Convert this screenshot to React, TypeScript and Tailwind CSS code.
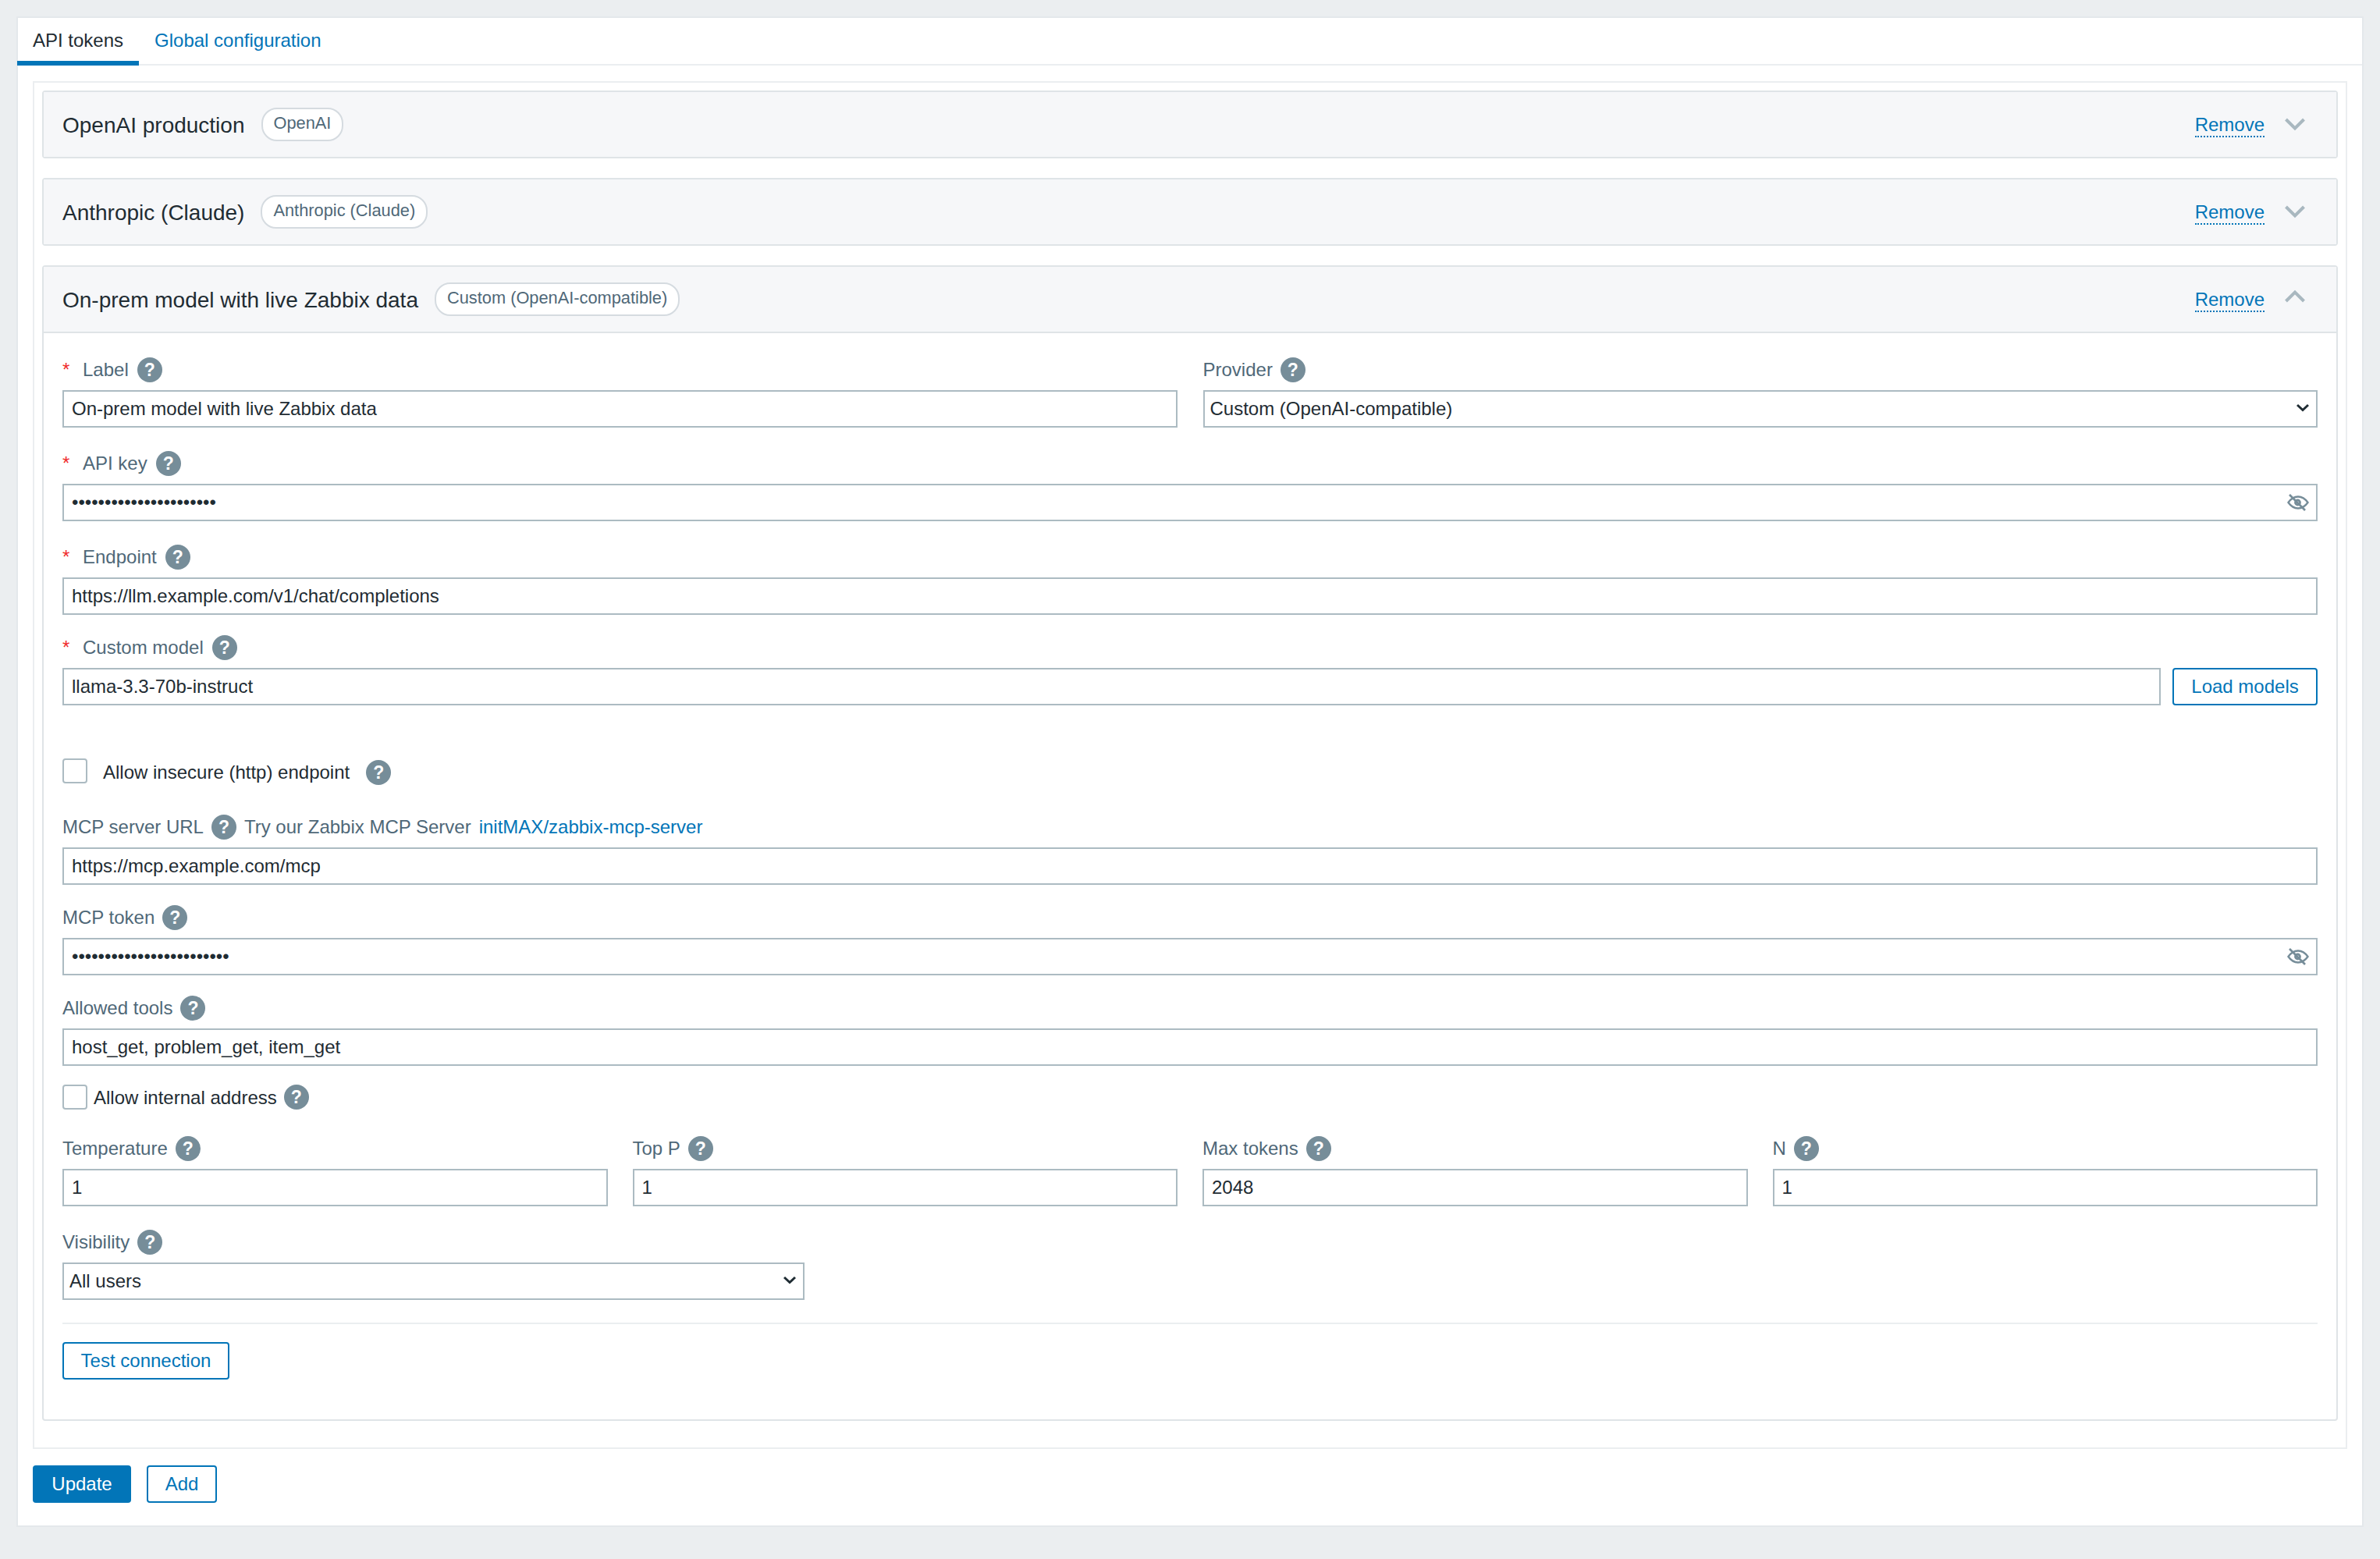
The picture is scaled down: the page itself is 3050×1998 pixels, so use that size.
const inputClass = "h-[48px] w-full border-2 border-[#acbbc2] bg-white px-[10px] text-[24px] text-[#1f2c33] outline-none";
const buttonClass = "h-[48px] rounded-[4px] border-2 border-[#0275b8] bg-white text-[24px] text-[#0275b8]";

const Help = ({ className = "" }: { className?: string }) => (
    <span className={`flex h-[32px] w-[32px] shrink-0 items-center justify-center rounded-full bg-[#768d99] text-[23px] font-bold text-white ${className}`}>?</span>
);

const Label = ({ text, required }: { text: string, required?: boolean }) => (
    <div className="mb-[10px] flex h-[32px] items-center text-[24px] text-[#4f6878]">
        {required && <span className="w-[26px] text-[24px] text-[#f02c2c]">*</span>}
        <span className={required ? "mr-[11px]" : "mr-[10px]"}>{text}</span>
        <Help />
    </div>
);

const EyeOff = () => (
    <svg className="absolute right-[11px] top-[12px]" width="28" height="24" viewBox="0 0 28 24" fill="none" stroke="#768d99">
        <path d="M1.5 12C5 7 9 4.5 14 4.5S23 7 26.5 12C23 17 19 19.5 14 19.5S5 17 1.5 12Z" strokeWidth="2.4" />
        <circle cx="13.5" cy="12" r="4.4" fill="#768d99" strokeWidth="0" />
        <circle cx="13.5" cy="12" r="1.6" fill="#fff" strokeWidth="0" />
        <path d="M3 2 23 22" strokeWidth="2.6" />
    </svg>
);

const Chevron = ({ up }: { up?: boolean }) => (
    <svg className={up ? "mb-[8px]" : ""} width="26" height="17" viewBox="0 0 26 17" fill="none" stroke="#a9b8c0" strokeWidth="4">
        <path d={up ? "M1.5 15 13 3.5 24.5 15" : "M1.5 2 13 13.5 24.5 2"} />
    </svg>
);

const Select = ({ value, className = "" }: { value: string, className?: string }) => (
    <div className={`relative ${className}`}>
        <select className="h-[48px] w-full appearance-none border-2 border-[#acbbc2] bg-white pl-[7px] pr-[30px] text-[24px] text-[#1f2c33] outline-none" defaultValue={value}>
            <option value={value}>{value}</option>
        </select>
        <svg className="pointer-events-none absolute right-[11px] top-[17px]" width="16" height="11" viewBox="0 0 16 11" fill="none" stroke="#1f2c33" strokeWidth="3">
            <path d="M1 2 8 8.5 15 2" />
        </svg>
    </div>
);

const ItemHeader = ({ title, provider, open }: { title: string, provider: string, open?: boolean }) => (
    <div className={`flex h-[83px] items-center bg-[#f6f7f9] pl-[24px] pr-[40px] ${open ? "h-[85px] border-b-2 border-[#dfe4e7]" : ""}`}>
        <span className="pt-[2px] text-[28px] text-[#1f2c33]">{title}</span>
        <span className="ml-[21px] flex h-[43px] items-center rounded-[20px] border-2 border-[#d5dbe0] bg-white px-[14px] pb-[2px] text-[21.8px] text-[#4f6878]">{provider}</span>
        <span className="ml-auto mr-[26px] mt-[3px] border-b-2 border-dotted border-[#0275b8] text-[24px] leading-[28px] text-[#0275b8]">Remove</span>
        <Chevron up={open} />
    </div>
);

const App = () => {
    return (
        <div className="min-h-[1998px] bg-[#ebeef0] p-[21px] font-['Liberation_Sans',Arial,sans-serif]">
            <div className="h-[1936px] border-2 border-[#e4e8eb] bg-white">
                <div className="-ml-px flex h-[61px] border-b-2 border-[#ebeef0] text-[24px]">
                    <div className="h-[61px] border-b-[6px] border-[#0275b8] px-[20px] pt-[11px] text-[#1f2c33]">API tokens</div>
                    <div className="px-[20px] pt-[11px] text-[#0275b8]">Global configuration</div>
                </div>

                <div className="mx-[19px] mt-[20px] flex h-[1753px] flex-col gap-[25px] border-2 border-[#ebeef0] px-[10px] pt-[10px]">
                    <div className="rounded-[4px] border-2 border-[#dfe4e7]">
                        <ItemHeader title="OpenAI production" provider="OpenAI" />
                    </div>
                    <div className="rounded-[4px] border-2 border-[#dfe4e7]">
                        <ItemHeader title="Anthropic (Claude)" provider="Anthropic (Claude)" />
                    </div>
                    <div className="h-[1481px] rounded-[4px] border-2 border-[#dfe4e7]">
                        <ItemHeader title="On-prem model with live Zabbix data" provider="Custom (OpenAI-compatible)" open />

                        <div className="px-[24px] pt-[31px]">
                            <div className="grid grid-cols-2 gap-x-[33px]">
                                <div>
                                    <Label text="Label" required />
                                    <input className={inputClass} readOnly value="On-prem model with live Zabbix data" />
                                </div>
                                <div>
                                    <Label text="Provider" />
                                    <Select value="Custom (OpenAI-compatible)" />
                                </div>
                            </div>

                            <div className="mt-[30px]">
                                <Label text="API key" required />
                                <div className="relative">
                                    <input className={inputClass} type="password" readOnly value="sk-0123456789abcdefghi" />
                                    <EyeOff />
                                </div>
                            </div>

                            <div className="mt-[30px]">
                                <Label text="Endpoint" required />
                                <input className={inputClass} readOnly value="https://llm.example.com/v1/chat/completions" />
                            </div>

                            <div className="mt-[26px]">
                                <Label text="Custom model" required />
                                <div className="flex gap-[15px]">
                                    <input className={inputClass} readOnly value="llama-3.3-70b-instruct" />
                                    <button className={`${buttonClass} w-[186px] shrink-0`}>Load models</button>
                                </div>
                            </div>

                            <div className="mt-[68px] flex h-[32px] items-center text-[24px] text-[#1f2c33]">
                                <span className="mr-[20px] h-[32px] w-[32px] rounded-[4px] border-2 border-[#acbbc2] bg-white" />
                                <span className="mr-[21px] mt-[4px]">Allow insecure (http) endpoint</span>
                                <Help className="mt-[4px]" />
                            </div>

                            <div className="mt-[40px]">
                                <div className="mb-[10px] flex h-[32px] items-center text-[24px] text-[#4f6878]">
                                    <span className="mr-[10px]">MCP server URL</span>
                                    <Help className="mr-[10px]" />
                                    <span className="mr-[10px]">Try our Zabbix MCP Server</span>
                                    <span className="text-[#0275b8]">initMAX/zabbix-mcp-server</span>
                                </div>
                                <input className={inputClass} readOnly value="https://mcp.example.com/mcp" />
                            </div>

                            <div className="mt-[26px]">
                                <Label text="MCP token" />
                                <div className="relative">
                                    <input className={inputClass} type="password" readOnly value="mcp-0123456789abcdefghij" />
                                    <EyeOff />
                                </div>
                            </div>

                            <div className="mt-[26px]">
                                <Label text="Allowed tools" />
                                <input className={inputClass} readOnly value="host_get, problem_get, item_get" />
                            </div>

                            <div className="mt-[24px] flex h-[32px] items-center text-[24px] text-[#1f2c33]">
                                <span className="mr-[8px] h-[32px] w-[32px] rounded-[4px] border-2 border-[#acbbc2] bg-white" />
                                <span className="mr-[9px] mt-[2px]">Allow internal address</span>
                                <Help />
                            </div>

                            <div className="mt-[34px] grid grid-cols-4 gap-x-[32px]">
                                <div>
                                    <Label text="Temperature" />
                                    <input className={inputClass} readOnly value="1" />
                                </div>
                                <div>
                                    <Label text="Top P" />
                                    <input className={inputClass} readOnly value="1" />
                                </div>
                                <div>
                                    <Label text="Max tokens" />
                                    <input className={inputClass} readOnly value="2048" />
                                </div>
                                <div>
                                    <Label text="N" />
                                    <input className={inputClass} readOnly value="1" />
                                </div>
                            </div>

                            <div className="mt-[30px]">
                                <Label text="Visibility" />
                                <Select value="All users" className="w-[951px]" />
                            </div>

                            <div className="mt-[29px] h-[2px] bg-[#ebeef0]" />
                            <button className={`${buttonClass} mt-[23px] w-[214px]`}>Test connection</button>
                        </div>
                    </div>
                </div>

                <div className="ml-[19px] mt-[21px] flex gap-[20px]">
                    <button className="h-[48px] w-[126px] rounded-[4px] bg-[#0275b8] text-[24px] text-white">Update</button>
                    <button className={`${buttonClass} w-[90px]`}>Add</button>
                </div>
            </div>
        </div>
    );
};

export default App;
